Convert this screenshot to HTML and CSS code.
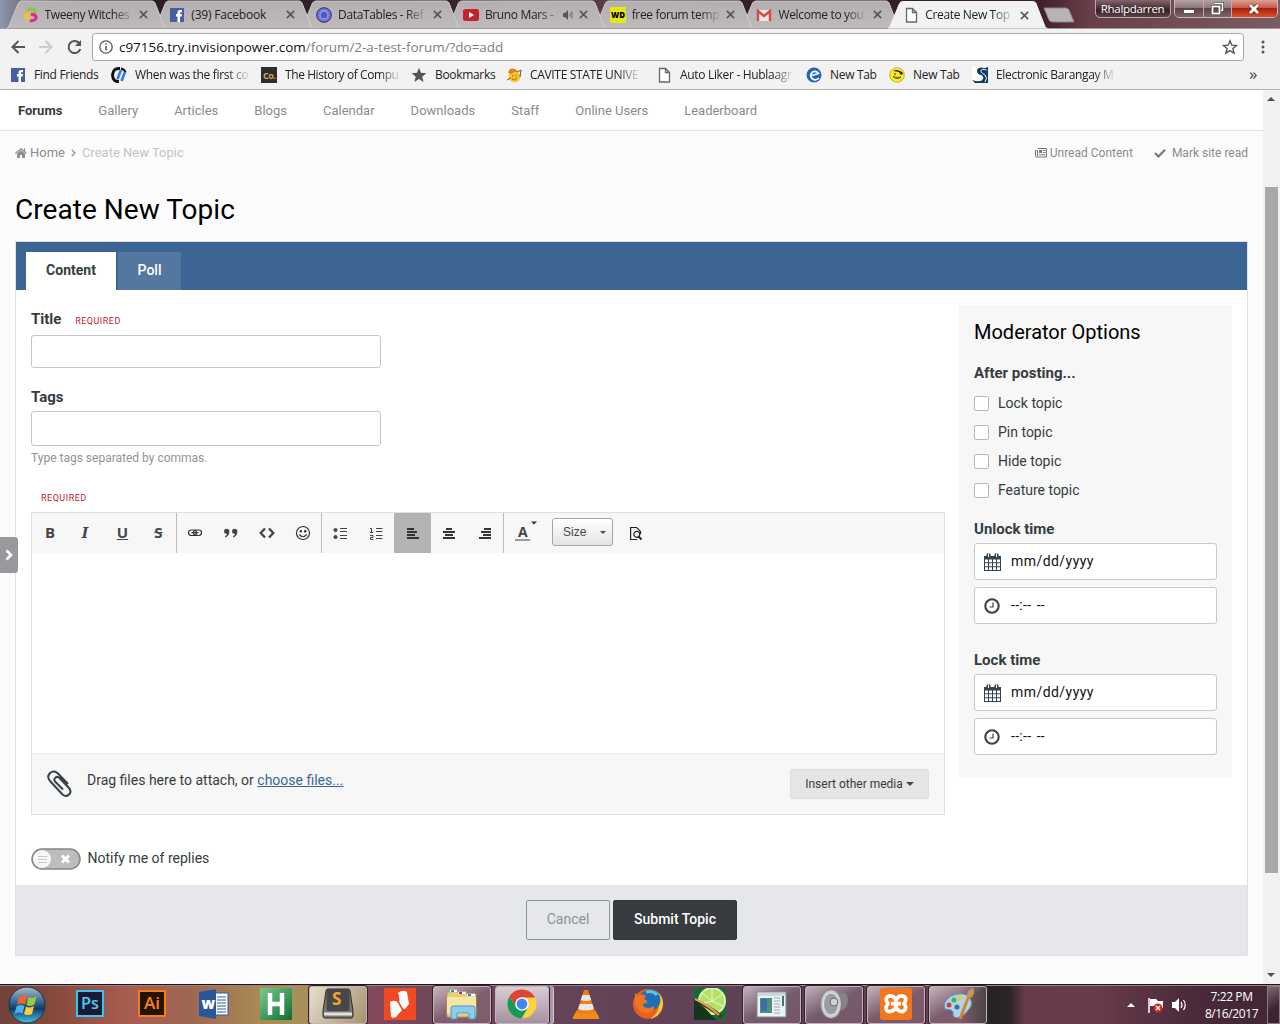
FILE: index.html
```html
<!DOCTYPE html>
<html lang="en">
<head>
<meta charset="utf-8">
<title>Create New Topic</title>
<link rel="stylesheet" href="styles.css">
</head>
<body>
<svg class="defs" width="0" height="0">
  <defs>
    <linearGradient id="tabfill" x1="0" y1="0" x2="0" y2="1"><stop offset="0" stop-color="#b3aeb0"/><stop offset="1" stop-color="#bfbabc"/></linearGradient>
    <linearGradient id="orb" x1="0" y1="0" x2="0" y2="1"><stop offset="0" stop-color="#a9bccb"/><stop offset=".45" stop-color="#2b628f"/><stop offset=".6" stop-color="#123b63"/><stop offset="1" stop-color="#3fc4ee"/></linearGradient>
    <linearGradient id="green" x1="0" y1="0" x2="1" y2="1"><stop offset="0" stop-color="#7ccc92"/><stop offset="1" stop-color="#0c6e30"/></linearGradient>
    <symbol id="tab" viewBox="0 0 160 28"><path d="M0 28 L2 26 L11.5 3 Q12.5 1 15 1 H145 Q147 1 148 3 L157 26 L159 28"/></symbol>
    <symbol id="x" viewBox="0 0 10 10"><path d="M1 1 9 9M9 1 1 9" stroke="#555" stroke-width="1.7"/></symbol>
    <symbol id="doc" viewBox="0 0 16 16"><path d="M3.5 1.5h6l4 4v9.500h-10zM9.500 1.500v4h4" fill="#fff" stroke="#666" stroke-width="1.300"/></symbol>
    <symbol id="fb" viewBox="0 0 16 16"><rect x="1" y="1" width="14" height="14" fill="#4460a0"/><path d="M8.500 15V9.500H7V7h1.500V5.500Q8.500 3 11 3h2v2.300h-1.300q-.7 0-.7.8V7h2l-.3 2.500H11V15z" fill="#fff"/></symbol>
    <symbol id="cal" viewBox="0 0 18 18"><path d="M0 3h17v15H0z" fill="#35434c"/><path d="M3 1h3v4H3zM11 1h3v4h-3z" fill="#35434c" stroke="#35434c" stroke-linejoin="round"/><path d="M4.500 1v3M12.500 1v3" stroke="#fff"/><path d="M1 6.500h3v2.800H1zM5 6.500h3v2.800H5zM9 6.500h3v2.800H9zM13 6.500h3v2.800h-3zM1 10.300h3v2.900H1zM5 10.300h3v2.900H5zM9 10.300h3v2.900H9zM13 10.300h3v2.900h-3zM1 14.200h3V17H1zM5 14.200h3V17H5zM9 14.200h3V17H9zM13 14.200h3V17h-3z" fill="#fff"/></symbol>
    <symbol id="clock" viewBox="0 0 18 18"><circle cx="8" cy="9" r="6.700" fill="#fff" stroke="#35434c" stroke-width="2.100"/><path d="M9 5.500V10H5.500" fill="none" stroke="#35434c" stroke-width="1.200"/></symbol>
  </defs>
</svg>

<header class="tabs">
  <div class="tab t1"><svg class="shape"><use href="#tab"/></svg><svg class="fav" viewBox="0 0 16 16" fill="none" stroke-width="3"><path d="M4.500 3.500q4-3 7-.5 2 3.500-3.500 4.500" stroke="#8cc63f"/><path d="M8 7.500q6 0 5 4-2 3-6 2" stroke="#e6248c"/><path d="M7 6.500q-5 .5-4.500 3Q3 12 7 11" stroke="#f0c81e"/></svg><span class="tt">Tweeny Witches</span><svg class="close"><use href="#x"/></svg></div>
  <div class="tab t2"><svg class="shape"><use href="#tab"/></svg><svg class="fav"><use href="#fb"/></svg><span class="tt full">(39) Facebook</span><svg class="close"><use href="#x"/></svg></div>
  <div class="tab t3"><svg class="shape"><use href="#tab"/></svg><svg class="fav" viewBox="0 0 16 16"><circle cx="8" cy="8" r="7.300" fill="#6f72d8" stroke="#2c2b66"/><circle cx="8" cy="8" r="4" fill="#5357c6" stroke="#9a9de8" stroke-width="1.300"/></svg><span class="tt">DataTables - Ref</span><svg class="close"><use href="#x"/></svg></div>
  <div class="tab t4"><svg class="shape"><use href="#tab"/></svg><svg class="fav" viewBox="0 0 16 16"><rect y="2" width="16" height="12" rx="2.500" fill="#c4232a"/><path d="M6 5v6l5-3z" fill="#fff"/></svg><span class="tt short">Bruno Mars -</span><svg class="snd" viewBox="0 0 12 10"><path d="M0 3h2l3-3v10L2 7H0z" fill="#555"/><path d="M7 3v4M9 1.500v7" stroke="#666"/></svg><svg class="close"><use href="#x"/></svg></div>
  <div class="tab t5"><svg class="shape"><use href="#tab"/></svg><svg class="fav" viewBox="0 0 16 16"><rect width="16" height="16" fill="#e9e413"/><text x="1" y="11" font-family="Open Sans,sans-serif" font-size="8" font-weight="800" textLength="14" lengthAdjust="spacingAndGlyphs">WD</text></svg><span class="tt">free forum temp</span><svg class="close"><use href="#x"/></svg></div>
  <div class="tab t6"><svg class="shape"><use href="#tab"/></svg><svg class="fav" viewBox="0 0 16 16"><path d="M1 3h14v11H1z" fill="#e9e6e6"/><path d="M2 14V4l6 5 6-5v10" fill="none" stroke="#d44a3e" stroke-width="2.400"/></svg><span class="tt">Welcome to you</span><svg class="close"><use href="#x"/></svg></div>
  <div class="tab active"><svg class="shape"><use href="#tab"/></svg><svg class="fav"><use href="#doc"/></svg><span class="tt">Create New Top</span><svg class="close"><use href="#x"/></svg></div>
  <svg class="newtab" viewBox="0 0 34 16"><path d="M1 1H23Q25 1 26 3L31 15H10Q7 15 6 13z" fill="#b9b3b5" stroke="#8d8588"/></svg>
  <div class="user">Rhalpdarren</div>
  <div class="winbtns">
    <span class="wb min"><svg width="14" height="14" viewBox="0 0 14 14"><rect x="1.500" y="7.500" width="11" height="4" fill="#fff" stroke="#555"/></svg></span>
    <span class="wb max"><svg width="14" height="14" viewBox="0 0 14 14" fill="none"><path d="M4.500 1.500h8v7h-2" stroke="#444" stroke-width="3"/><path d="M4.500 1.500h8v7h-2" stroke="#fff" stroke-width="1.500"/><rect x="2.500" y="4.500" width="7" height="7" stroke="#444" stroke-width="3"/><rect x="2.500" y="4.500" width="7" height="7" stroke="#fff" stroke-width="1.800"/></svg></span>
    <span class="wb cls"><svg width="12" height="12" viewBox="0 0 12 12"><path d="M2 2 10 10M10 2 2 10" stroke="#6b2a26" stroke-width="4.500"/><path d="M2 2 10 10M10 2 2 10" stroke="#fff" stroke-width="2.800"/></svg></span>
  </div>
</header>

<div class="toolbar">
  <svg class="nav" width="80" height="18" viewBox="0 0 80 18" fill="none" stroke-width="2"><path d="M15 9H2.500M8.500 3l-6 6 6 6" stroke="#555"/><path d="M29 9h12.500M35.500 3l6 6-6 6" stroke="#ccc"/><path d="M69 5A6 6 0 1 0 70.300 11" stroke="#555"/><path d="M71 2v6h-6z" fill="#555"/></svg>
  <div class="address">
    <svg width="14" height="14" viewBox="0 0 14 14"><circle cx="7" cy="7" r="6.200" fill="none" stroke="#555" stroke-width="1.300"/><path d="M7 6v4.500M7 3.300v1.500" stroke="#555" stroke-width="1.500"/></svg>
    <span class="url">c97156.try.invisionpower.com<i>/forum/2-a-test-forum/?do=add</i></span>
    <svg width="16" height="16" viewBox="0 0 16 16"><path d="M8 1.800l1.800 4.400 4.700.3-3.600 3 1.200 4.700L8 11.600l-4.100 2.600 1.200-4.700-3.600-3 4.700-.3z" fill="none" stroke="#555" stroke-width="1.400"/></svg>
  </div>
  <svg class="dots" width="4" height="14" viewBox="0 0 4 14" fill="#555"><circle cx="2" cy="2" r="1.500"/><circle cx="2" cy="7" r="1.500"/><circle cx="2" cy="12" r="1.500"/></svg>
</div>

<div class="bookmarks">
  <div class="bm b1"><svg><use href="#fb"/></svg><span>Find Friends</span></div>
  <div class="bm b2"><svg viewBox="0 0 16 16" fill="none"><path d="M9 1.500Q2 1 1.500 8 2 15 8 14.500" stroke="#111" stroke-width="3"/><path d="M10 1.500q4 1 4.500 4" stroke="#111" stroke-width="2"/><path d="M6.500 12 10 3M10.500 14l3.500-9" stroke="#2f7de0" stroke-width="2.600"/></svg><span class="fade">When was the first co</span></div>
  <div class="bm b3"><svg viewBox="0 0 16 16"><rect width="16" height="16" fill="#2f2d2b"/><text x="2" y="12" font-family="Open Sans,sans-serif" font-size="9" font-weight="700" fill="#c9a75e">Co.</text></svg><span class="fade">The History of Compu</span></div>
  <div class="bm b4"><svg viewBox="0 0 16 16"><path d="M8 .8l2 5 5.400.4-4.200 3.500 1.400 5.400L8 12.100l-4.600 3 1.400-5.400L.6 6.200 6 5.800z" fill="#555"/></svg><span>Bookmarks</span></div>
  <div class="bm b5"><svg viewBox="0 0 16 16"><circle cx="8.500" cy="9.500" r="5.800" fill="#f7c42a"/><path d="M2 6q1-6 7-4l4 3q-5-1-8 2z" fill="#ea7b25"/><path d="M1 13l4-2M11 5l4-2-1 7" stroke="#6c5a32" fill="none"/><path d="M6 12q3 2 5-1M6.500 8v1.500M10 8v1.500" stroke="#b86a14" fill="none"/></svg><span class="fade">CAVITE STATE UNIVE</span></div>
  <div class="bm b6"><svg><use href="#doc"/></svg><span class="fade">Auto Liker - Hublaagr</span></div>
  <div class="bm b7"><svg viewBox="0 0 16 16"><circle cx="8" cy="8" r="7.500" fill="#2565b8"/><path d="M13 11Q10 14 6.500 12 3 8.500 6.500 5q4-2 6 1.500L6 8.500" fill="none" stroke="#fff" stroke-width="1.700"/></svg><span>New Tab</span></div>
  <div class="bm b8"><svg viewBox="0 0 16 16"><circle cx="8" cy="8" r="7.300" fill="#ffee1c" stroke="#b3a31a" stroke-width=".8"/><path d="M4 4q5-3 10 2l-1 2-2-1-1-2z" fill="#222"/><path d="M5 7h2" stroke="#222"/><path d="M4 9.500q4 4 8 .5-4 1-8-.5z" fill="#fff" stroke="#222" stroke-width=".7"/></svg><span>New Tab</span></div>
  <div class="bm b9"><svg viewBox="0 0 16 16"><rect width="16" height="16" fill="#fff"/><path d="M13 1Q5-1 5 4q0 3 4 4 3 1 2 4-2 4-11 1l3 3h13V0z" fill="#103a5e"/><path d="M14.500 3Q9 1 9 4.500q1 2 4 3.500 3 3 0 7" fill="none" stroke="#fff"/></svg><span class="fade">Electronic Barangay M</span></div>
  <span class="more">»</span>
</div>

<div class="viewport">
  <main class="page">
    <nav class="sitenav"><b>Forums</b><a>Gallery</a><a>Articles</a><a>Blogs</a><a>Calendar</a><a>Downloads</a><a>Staff</a><a>Online Users</a><a>Leaderboard</a></nav>
    <div class="crumbs">
      <svg width="12" height="10" viewBox="0 0 12 10"><path d="M6 2.200 2 5.500V10h3V7h2v3h3V5.500z" fill="#8f8f8f"/><path d="M.4 5.400 6 .8l5.600 4.600M9.500 .5v3" fill="none" stroke="#8f8f8f" stroke-width="1.300"/></svg>
      <span class="home">Home</span>
      <svg class="chev" width="5" height="8" viewBox="0 0 5 8"><path d="M.8.8 4 4 .8 7.200" fill="none" stroke="#999" stroke-width="1.400"/></svg>
      <span class="here">Create New Topic</span>
      <svg width="12" height="10" viewBox="0 0 12 10"><path d="M2.500.5h9v8.500H1.500Q.5 9 .5 8V2.500h2V8" fill="none" stroke="#777"/><path d="M4 2h3v3H4z" fill="#777"/><path d="M8 2.500h2.500M8 4.500h2.500M4 6.800h6.500" stroke="#777"/></svg>
      <span class="unread">Unread Content</span>
      <svg class="check" width="12" height="10" viewBox="0 0 12 10"><path d="M1 5l3.500 3.500L11 1.800" fill="none" stroke="#777" stroke-width="2.200"/></svg>
      <span class="mark">Mark site read</span>
    </div>
    <h1>Create New Topic</h1>
    <section class="panel">
      <div class="ptabs"><span class="on">Content</span><span class="off">Poll</span></div>
      <div class="cols">
        <div class="form">
          <div class="label">Title <em>REQUIRED</em></div>
          <div class="input title"></div>
          <div class="label second">Tags</div>
          <div class="input tags"></div>
          <div class="hint">Type tags separated by commas.</div>
          <div class="req"><em>REQUIRED</em></div>
          <div class="editor">
            <div class="edbar">
              <div class="grp">
                <span class="bt bold">B</span><span class="bt ital">I</span><span class="bt under">U</span><span class="bt strike">S</span>
              </div>
              <div class="grp">
                <span class="bt"><svg width="16" height="16" viewBox="0 0 16 16" fill="none" stroke="#333" stroke-width="1.200"><rect x="1.500" y="5" width="8" height="5.500" rx="2.700"/><rect x="6.500" y="5" width="8" height="5.500" rx="2.700"/><path d="M4.500 7.700h7"/></svg></span>
                <span class="bt"><svg width="16" height="16" viewBox="0 0 16 16" fill="#444"><path d="M1 6.500a2.700 2.700 0 1 1 5.400 0q0 4-3.900 6l-.6-.9Q4 10 4 8.700 1 9 1 6.500zM9 6.500a2.700 2.700 0 1 1 5.400 0q0 4-3.900 6l-.6-.9Q12 10 12 8.700 9 9 9 6.500z"/></svg></span>
                <span class="bt"><svg width="16" height="16" viewBox="0 0 16 16" fill="none" stroke="#444" stroke-width="2.300"><path d="M6 3.500 1.700 8 6 12.500M10 3.500 14.300 8 10 12.500"/></svg></span>
                <span class="bt"><svg width="16" height="16" viewBox="0 0 16 16" fill="none" stroke="#333" stroke-width="1.200"><circle cx="8" cy="8" r="6.500"/><path d="M4.300 9.500Q8 14 11.700 9.500"/><circle cx="5.800" cy="6.200" r=".7" fill="#333"/><circle cx="10.200" cy="6.200" r=".7" fill="#333"/></svg></span>
              </div>
              <div class="grp lists">
                <span class="bt"><svg width="16" height="16" viewBox="0 0 16 16" stroke="#444" fill="#444"><circle cx="3.500" cy="5" r="1.600"/><circle cx="3.500" cy="12" r="1.600"/><path d="M8 3.500h7M8 6.500h7M8 10.500h7M8 13.500h7"/></svg></span>
                <span class="bt"><svg width="16" height="16" viewBox="0 0 16 16" stroke="#444" fill="none"><path d="M2 3.500h1.500v4M2 7.500h3M2 10.500h3v2H2.500v2H5.500M8 3.500h6.500M8 6.500h6.500M8 10.500h6.500M8 13.500h6.500"/></svg></span>
              </div>
              <div class="grp aligns">
                <span class="bt sel"><svg width="12" height="12" viewBox="0 0 12 12" fill="#333"><path d="M0 0h7v2H0zM0 3h10v2H0zM0 6h8v2H0zM0 9h12v2H0z"/></svg></span>
                <span class="bt"><svg width="12" height="12" viewBox="0 0 12 12" fill="#333"><path d="M3 0h6v2H3zM0 3h12v2H0zM2 6h8v2H2zM0 9h12v2H0z"/></svg></span>
                <span class="bt"><svg width="12" height="12" viewBox="0 0 12 12" fill="#333"><path d="M5 0h7v2H5zM2 3h10v2H2zM4 6h8v2H4zM0 9h12v2H0z"/></svg></span>
              </div>
              <svg class="color" width="26" height="24" viewBox="0 0 26 24"><text x="3" y="17" font-family="Open Sans,sans-serif" font-size="14" font-weight="700" fill="#444">A</text><path d="M0 20h15" stroke="#999" stroke-width="2"/><path d="M16 1.500h6l-3 3z" fill="#333"/></svg>
              <div class="size">Size<i></i></div>
              <svg class="prev" width="14" height="15" viewBox="0 0 14 15" fill="none" stroke="#222" stroke-width="1.200"><path d="M8 13.500H1.600V1.500h6l3.500 3.500M11.500 5v3"/><circle cx="7.800" cy="8.300" r="3"/><path d="M9.500 10.500l3 3" stroke-width="2"/></svg>
            </div>
            <div class="area"></div>
            <div class="attach">
              <svg width="26" height="28" viewBox="0 0 26 28" fill="none" stroke="#35434c" stroke-width="2"><path d="M21 14 11 3.500Q7-.3 3 3-.5 7 3 11l12.500 13.500q3.500 3 6.500 0 3-3 0-6.500L12 7.500Q9.500 6 8 8q-1.500 2 .5 4L16 19.500"/></svg>
              <span>Drag files here to attach, or <u>choose files...</u></span>
              <div class="media">Insert other media <i></i></div>
            </div>
          </div>
          <div class="notify"><svg width="50" height="22" viewBox="0 0 50 22"><rect x="1" y="1" width="48" height="20" rx="10" fill="#bdbdbd" stroke="#858585" stroke-width="1.500"/><circle cx="11" cy="11" r="9" fill="#f7f7f7"/><path d="M7 8.500h9M7 11.500h9M7 14.500h9" stroke="#c8c8c8"/><path d="M31 7.500l7 7M38 7.500l-7 7" stroke="#fff" stroke-width="3"/></svg><span>Notify me of replies</span></div>
        </div>
        <aside class="mod">
          <h2>Moderator Options</h2>
          <h3 class="after">After posting...</h3>
          <div class="opt"><i></i><span>Lock topic</span></div>
          <div class="opt"><i></i><span>Pin topic</span></div>
          <div class="opt"><i></i><span>Hide topic</span></div>
          <div class="opt"><i></i><span>Feature topic</span></div>
          <h3 class="unlock">Unlock time</h3>
          <div class="dt"><svg><use href="#cal"/></svg><span class="date">mm/dd/yyyy</span></div>
          <div class="dt"><svg><use href="#clock"/></svg><span class="time">--:-- --</span></div>
          <h3 class="lock">Lock time</h3>
          <div class="dt"><svg><use href="#cal"/></svg><span class="date">mm/dd/yyyy</span></div>
          <div class="dt"><svg><use href="#clock"/></svg><span class="time">--:-- --</span></div>
        </aside>
      </div>
      <div class="foot"><span class="cancel">Cancel</span><span class="submit">Submit Topic</span></div>
    </section>
    <div class="handle"><svg width="8" height="12" viewBox="0 0 8 12"><path d="M1.500 1.500 6 6l-4.500 4.500" fill="none" stroke="#fff" stroke-width="2.600"/></svg></div>
  </main>
  <div class="scroll"><i class="up"></i><b></b><i class="down"></i></div>
</div>

<footer class="taskbar">
  <div class="start"><svg width="38" height="38" viewBox="0 0 38 38"><circle cx="19" cy="19" r="18" fill="url(#orb)" stroke="#1b3446"/><path d="M11 11q4-3 8-.5l-2 8q-4-2-8 .5z" fill="#f0642c"/><path d="M20.500 11q4 2 8-.5l-2 8q-4 2.500-8 .5z" fill="#9acb3c"/><path d="M8.500 20.500q4-2.500 8-.5l-2 7.500q-4-2-8 .5z" fill="#4fb3ea"/><path d="M18 20.500q4 2 8-.5l-2 8q-4 2-8 0z" fill="#fbcc3a"/></svg></div>
  <div class="slot"><svg viewBox="0 0 32 32"><rect x="3" y="3" width="26" height="25" fill="#1c1a31" stroke="#35c5f2" stroke-width="2"/><text x="7" y="21" font-family="Open Sans,sans-serif" font-size="17" font-weight="600" fill="#4bcbf5" textLength="18" lengthAdjust="spacingAndGlyphs">Ps</text></svg></div>
  <div class="slot"><svg viewBox="0 0 32 32"><rect x="3" y="3" width="26" height="25" fill="#251302" stroke="#f57e14" stroke-width="2"/><text x="8" y="21" font-family="Open Sans,sans-serif" font-size="17" font-weight="600" fill="#f7841b" textLength="16" lengthAdjust="spacingAndGlyphs">Ai</text></svg></div>
  <div class="slot"><svg viewBox="0 0 32 32"><rect x="16" y="5" width="14" height="22" fill="#fff" stroke="#2c5ba6"/><path d="M19 9h9M19 12h9M19 15h9M19 18h9M19 21h9M19 24h9" stroke="#2c5ba6"/><path d="M1 4 18 1v30L1 28z" fill="#2b579a"/><text x="3.500" y="21" font-family="Open Sans,sans-serif" font-size="15" font-weight="800" fill="#fff">w</text></svg></div>
  <div class="slot"><svg viewBox="0 0 32 32"><path d="M0 0h32v32H0z" fill="url(#green)"/><path d="M10 5v22M22 5v22M10 16h12" stroke="#fff" stroke-width="4.500"/></svg></div>
  <div class="slot open bright"><svg viewBox="0 0 32 32"><path d="M4 3Q4 1 6 1h20q2 0 2 2l3 20v5q0 2-2 2H3q-2 0-2-2v-5z" fill="#777775" stroke="#2b2b2b"/><rect x="4.500" y="1" width="23" height="22" rx="2" fill="#474747"/><path d="M2 26h28" stroke="#e2e2e0" stroke-width="3"/><text x="10" y="17" font-family="Open Sans,sans-serif" font-size="17" font-weight="700" fill="#f6a13a">S</text></svg></div>
  <div class="slot"><svg viewBox="0 0 32 32"><path d="M0 0h32v32H0z" fill="#f04a22"/><path d="M6 14q5-3 8 1l4 7-6 7q-4 2-5-1z" fill="#fff"/><path d="M14 5q5-4 9-1l2 12-4 5q-3 0-4-4-3-2-3-6z" fill="#fff"/><path d="M14 6l1 9 5 9" fill="none" stroke="#f04a22" stroke-width="1.300"/></svg></div>
  <div class="slot open"><svg viewBox="0 0 32 32"><path d="M1 4h10l2 2h17v23H1z" fill="#e5cf7c" stroke="#b49b4b"/><path d="M4 3h7M12 5h8M21 7h8" stroke="#fff" stroke-width="2.500"/><path d="M5 3h3" stroke="#2ca93e" stroke-width="2"/><path d="M13 5h3" stroke="#cf3122" stroke-width="2"/><path d="M22 7h3" stroke="#2480d2" stroke-width="2"/><path d="M1 9h29v17H1z" fill="#f6e7a2"/><path d="M5 31V20q0-2 2-2h20q2 0 2 2v11h-6v-6H11v6z" fill="#8ecbee" stroke="#4b98c4"/></svg></div>
  <div class="slot open chrome"><svg viewBox="0 0 32 32"><circle cx="16" cy="16" r="14.500" fill="#fdd23e"/><path d="M3.500 8.500A14.500 14.500 0 0 1 29 9.500H16L10 19z" fill="#db4437"/><path d="M3.500 8.500A14.500 14.500 0 0 0 15.500 30.500l6-10-11-1z" fill="#159a59"/><circle cx="16" cy="16" r="6.800" fill="#fff"/><circle cx="16" cy="16" r="5.400" fill="#4285f4"/></svg></div>
  <div class="slot"><svg viewBox="0 0 32 32"><path d="M7 22h18l4 7v2H3v-2z" fill="#f48a1c"/><path d="M14 2h4l7 22q-9 4-18 0z" fill="#f27d16"/><path d="M12.500 7h7l1.700 5q-5 2-10.500 0zM9.700 16h12.700l1.500 5q-8 3-15.800 0z" fill="#e6e8ea"/></svg></div>
  <div class="slot"><svg viewBox="0 0 32 32"><circle cx="16" cy="16" r="15" fill="#e8601c"/><path d="M22 2q10 5 9 15-2 12-13 14 9-6 9-15 0-8-5-14z" fill="#f9c43c"/><circle cx="18" cy="12" r="10.500" fill="#1f6fb4"/><path d="M14 4q7-2 11 3" stroke="#62c2e7" stroke-width="3" fill="none"/><path d="M3 5l4 3q4-3 7 0l-2 3q4 1 3 4-4 0-4 3 5 4 11 0 1 6-6 7Q5 25 3 15z" fill="#ee7426"/></svg></div>
  <div class="slot"><svg viewBox="0 0 32 32"><path d="M0 0h32v32H0z" fill="#126c35"/><circle cx="18" cy="13" r="13" fill="#b5e06a" stroke="#d9f4ac" stroke-width="2"/><path d="M18 13V1M18 13l10-6M18 13l11 5M18 13 8 5M18 13 6 16" stroke="#e8f7c9"/><path d="M0 12q15 6 28 17" stroke="#632d11" stroke-width="3.500"/><path d="M0 11q12 9 22 21H0z" fill="#17351c"/><path d="M1 11q13 6 24 16" stroke="#cfae62" stroke-width="2" fill="none"/></svg></div>
  <div class="slot open"><svg viewBox="0 0 32 32"><rect x="1" y="4" width="29" height="25" fill="#eef2f5" stroke="#7a8793"/><path d="M2 6.500h27" stroke="#cdd8e2" stroke-width="3"/><path d="M4 10h12v15H4z" fill="#4d8f84"/><path d="M5 11h6v12H5z" fill="#3a6faa"/><path d="M18 10h6M18 13h6M18 16h6M18 19h6M18 22h6M18 25h6" stroke="#9aa"/><path d="M26 8h2v10h-2z" fill="#377c6c"/></svg></div>
  <div class="slot open"><svg viewBox="0 0 32 32"><path d="M16 2l6 4q7-4 8 6-1 10-7 10l-8 8z" fill="#838587"/><ellipse cx="13" cy="16" rx="10.500" ry="14.500" fill="#c9cbcd" stroke="#77797b"/><ellipse cx="13" cy="16" rx="7.500" ry="11" fill="#9b9da0" stroke="#e7e7e7"/><circle cx="16" cy="14" r="4" fill="#d0d1d3" stroke="#66686b"/></svg></div>
  <div class="slot open"><svg viewBox="0 0 32 32"><rect width="32" height="32" rx="3" fill="#f3761d"/><path d="M16 13Q14 7 9 8 4 10 8 15.500 4 21 8 23.500q6 1 8-5.500 2 6.500 7 5.500 5-3 1-8 4-5.500-1-7.500-5-1-7 5M11 15.700h10" fill="none" stroke="#fff" stroke-width="3.700"/></svg></div>
  <div class="slot open"><svg viewBox="0 0 32 32"><path d="M3 21q-3-7 6-13 12-5 18 1 5 7 0 12-4 6-9 8-6 2-7-2 1-4-2-5z" fill="#a9d5ee" stroke="#5a94b7"/><circle cx="7" cy="17" r="2.500" fill="#da3f35"/><circle cx="12" cy="12" r="2.500" fill="#4cae4e"/><circle cx="18" cy="10" r="2.500" fill="#f3c635"/><circle cx="15" cy="19" r="2.500" fill="#4b6b8a"/><path d="M28 5 18 31" stroke="#dc8424" stroke-width="3"/><path d="M25 8q0-7 6-8 3 5-2 10z" fill="#c69a55"/></svg></div>
  <svg class="tray" width="66" height="20" viewBox="0 0 66 20"><path d="M3 12h8L7 8z" fill="#fff"/><path d="M25 3v15" stroke="#fff" stroke-width="1.500"/><path d="M26 4h6l2 2h5v7h-5l-2-2h-6z" fill="#fff"/><circle cx="34" cy="13" r="4.500" fill="#d3242b"/><path d="M32 11l4 4M36 11l-4 4" stroke="#fff" stroke-width="1.400"/><path d="M48 7h3l4-4v14l-4-4h-3z" fill="#fff"/><path d="M57 7q2 3 0 6M59.500 5q3.500 5 0 10" fill="none" stroke="#fff" stroke-width="1.200"/></svg>
  <div class="when"><span>7:22 PM</span><span>8/16/2017</span></div>
  <div class="peek"></div>
</footer>
</body>
</html>
```
FILE: styles.css
```css
* { box-sizing: border-box; }
body { margin: 0; width: 1280px; height: 1024px; overflow: hidden; display: flex; flex-direction: column; background: #fcfcfc; font-family: Roboto, sans-serif; color: #353c41; }
.defs { position: absolute; }
i, em { font-style: normal; }
svg { flex: none; }

.tabs { height: 29px; flex: none; display: flex; padding-left: 7px; background: linear-gradient(90deg, #8d97ad 0, #6e6571 30px, #2b1c25 90px, #35252c 460px, #5a4348 620px, #2d1d26 760px, #3f2028 1040px, #693f49 1090px, #7a5c62 1280px); border-bottom: 1px solid #a39ea1; }
.tab { width: 146.8px; flex: none; height: 28px; display: flex; align-items: center; padding: 1px 0 0 15.500px; position: relative; }
.shape { position: absolute; left: 0; top: 0; width: 160px; height: 28px; fill: url(#tabfill); stroke: #d0cbcd; }
.t1 { z-index: 7; } .t2 { z-index: 6; } .t3 { z-index: 5; } .t4 { z-index: 4; } .t5 { z-index: 3; } .t6 { z-index: 2; }
.active { z-index: 9; height: 29px; }
.active .shape { fill: #f2f2f2; stroke: #f2f2f2; height: 29px; }
.fav { width: 16px; height: 16px; position: relative; margin-right: 6px; }
.tt { position: relative; width: 87px; flex: none; white-space: nowrap; font: 12px/18px "Open Sans", sans-serif; letter-spacing: -0.35px; color: #222; -webkit-mask-image: linear-gradient(90deg, #000 68px, rgba(0,0,0,.12) 87px); }
.tt.full { -webkit-mask-image: none; letter-spacing: -0.2px; }
.tt.short { width: 72px; -webkit-mask-image: linear-gradient(90deg, #000 54px, rgba(0,0,0,.3) 72px); }
.snd { position: relative; width: 12px; height: 10px; margin-left: 6px; margin-right: -3px; }
.close { position: relative; width: 9px; height: 9px; margin-left: 7.500px; }
.newtab { width: 34px; height: 16px; margin: 7px 0 0 8px; }
.user { margin-left: 18px; width: 76px; height: 19px; margin-top: -1px; border: 1px solid #b9a9ac; border-radius: 0 0 5px 5px; background: linear-gradient(#85666c, #352027 60%, #5b454b); color: #fff; font: 11.5px/18px "Open Sans", sans-serif; letter-spacing: -0.3px; text-align: center; }
.winbtns { margin-left: 3px; display: flex; height: 19px; margin-top: -1px; border: 1px solid #c6b9bc; border-radius: 0 0 5px 5px; overflow: hidden; width: 104px; flex: none; }
.wb { width: 28px; display: flex; align-items: center; justify-content: center; background: linear-gradient(#b5a1a5, #8f777c 45%, #5e4247 50%, #806469); }
.max, .cls { border-left: 1px solid #b9a9ac; }
.cls { flex: 1; background: linear-gradient(#dba193, #c9594a 45%, #ad1f0c 50%, #d4502e); }

.toolbar { height: 33px; flex: none; background: #f2f2f2; display: flex; align-items: center; padding: 3px 0 0 10px; }
.address { margin-left: 2px; width: 1152px; height: 28px; border: 1px solid #aaa; border-radius: 3px; background: #fff; display: flex; align-items: center; padding: 0 5px 0 6px; }
.url { flex: 1; margin-left: 6px; font: 13.5px/20px "Open Sans", sans-serif; letter-spacing: -0.04px; color: #111; white-space: nowrap; }
.url i { color: #808080; }
.dots { margin-left: 17px; }

.bookmarks { height: 28px; flex: none; background: #f2f2f2; border-bottom: 1px solid #b6b4b6; display: flex; align-items: center; padding-left: 10px; font: 12px/18px "Open Sans", sans-serif; letter-spacing: -0.32px; color: #222; }
.bm { display: flex; align-items: center; flex: none; padding-bottom: 2px; }
.bm svg { width: 16px; height: 16px; margin-right: 8px; }
.bm span { white-space: nowrap; }
.fade { -webkit-mask-image: linear-gradient(90deg, #000 calc(100% - 20px), rgba(0,0,0,.12)); }
.b1 { width: 101px; } .b2 { width: 150px; } .b3 { width: 150px; letter-spacing: -0.42px; } .b4 { width: 95px; } .b5 { width: 150px; } .b6 { width: 150px; }
.b7 { width: 83px; } .b8 { width: 83px; } .b9 { width: 136px; }
.more { margin-left: auto; margin-right: 23px; font-size: 17px; color: #444; padding-bottom: 3px; }

.viewport { height: 894px; flex: none; display: flex; }
.page { width: 1263px; flex: none; position: relative; background: #fcfcfc; }
.sitenav { height: 41px; background: #fff; border-bottom: 1px solid #e0e0e0; display: flex; gap: 36px; padding-left: 18px; font-size: 13px; line-height: 41px; color: #8b8b8b; }
.sitenav b { color: #353c41; font-weight: 700; }
.crumbs { height: 44px; display: flex; align-items: center; padding: 0 15px 1px; font-size: 13px; color: #8b8b8b; }
.crumbs span { line-height: 16px; }
.home { margin-left: 3px; }
.chev { margin: 0 6px; }
.here { color: #c3c3c3; flex: 1; }
.unread, .mark { font-size: 12px; margin-left: 3px; }
.check { margin-left: 21px; }
.mark { margin-left: 6px; }
h1, h2, h3 { margin: 0; font-weight: 400; color: #000; }
h1 { font-size: 28px; line-height: 36px; margin: 17px 0 13px 15px; letter-spacing: 0.04px; }
.panel { margin-left: 15px; width: 1233px; border: 1px solid #dfe1e3; background: #fff; }
.ptabs { height: 48px; background: #3d6594; display: flex; gap: 2px; padding: 10px 0 0 10px; font-size: 14px; font-weight: 500; line-height: 37px; text-align: center; }
.on { width: 90px; background: #fff; font-weight: 700; color: #353c41; }
.off { width: 63px; background: #53779f; color: #fff; }
.cols { display: flex; gap: 14px; padding: 15px 15px 0; align-items: flex-start; height: 595px; }
.form { width: 914px; flex: none; }
.label { height: 28px; line-height: 28px; margin-bottom: 2px; font-size: 15px; font-weight: 700; }
em { font-size: 9px; font-weight: 400; letter-spacing: 0.5px; color: #c0192b; margin-left: 10px; }
.input { width: 350px; border: 1px solid #c5c5c5; border-radius: 3px; background: #fff; }
.title { height: 33px; }
.second { margin: 15px 0 0; }
.tags { height: 35px; }
.hint { font-size: 12px; line-height: 24px; color: #8f9498; }
.req { height: 30px; line-height: 30px; margin-top: 12px; }
.req em { vertical-align: middle; }
.editor { height: 303px; border: 1px solid #e0e0e0; }
.edbar { height: 40px; background: #f7f7f7; display: flex; align-items: center; }
.grp { display: flex; height: 40px; border-right: 1px solid #bcbcbc; }
.lists { border: 0; }
.bt { width: 36px; display: flex; align-items: center; justify-content: center; font: 700 15px/38px "Open Sans", sans-serif; color: #484848; }
.bold, .under, .strike, .ital { padding-bottom: 2px; }
.under, .strike { padding-left: 1px; }
.ital { font-family: "DejaVu Serif", serif; font-style: italic; font-size: 14px; padding-right: 2px; padding-bottom: 0; }
.under { text-decoration: underline; }
.strike { text-decoration: line-through; }
.sel { width: 37px; background: #b3b3b3; }
.aligns svg { margin-top: 1px; }
.color { margin: 0 0 3px 11px; }
.size { margin-left: 11px; margin-bottom: 2px; width: 61px; height: 28px; border: 1px solid #a6a6a6; border-radius: 3px; background: linear-gradient(#fff, #e4e4e4); font: 12px/26px "Liberation Sans", sans-serif; padding: 0 6px 0 10px; display: flex; justify-content: space-between; align-items: center; color: #474747; }
.size i, .media i { border: 3px solid transparent; border-top-color: #474747; border-bottom: 0; }
.prev { margin-left: 16px; }
.area { height: 200px; background: #fff; }
.attach { height: 61px; background: #f7f7f7; border-top: 1px solid #ebebeb; display: flex; padding: 0 15px; font-size: 14px; }
.attach svg { margin: 16px 0 0 0; }
.attach span { margin-left: 14px; line-height: 52px; flex: 1; }
u { color: #3d6594; }
.media { margin-top: 15px; width: 139px; height: 30px; background: #e5e5e5; border: 1px solid #dedede; border-radius: 2px; font-size: 12px; display: flex; align-items: center; justify-content: center; gap: 3px; }
.media i { border-width: 4px 4px 0; }
.notify { margin-top: 33px; height: 22px; display: flex; align-items: center; font-size: 14px; line-height: 20px; }
.notify span { margin: 0 0 2px 6.500px; }
.mod { width: 273px; height: 472px; background: #f7f7f7; padding: 15px; }
h2 { font-size: 20px; line-height: 24px; }
h3 { font-size: 15px; font-weight: 700; line-height: 24px; color: #353c41; }
.after { margin: 17px 0 4px; }
.opt { height: 29px; line-height: 18px; font-size: 14px; display: flex; align-items: center; }
.opt span { padding-bottom: 2px; }
.opt i { width: 15px; height: 15px; border: 1px solid #b8b8b8; border-radius: 2px; background: #fff; margin-right: 9px; }
.unlock { margin: 12px 0 2px; }
.lock { margin: 24px 0 2px; }
.dt { height: 37px; border: 1px solid #c9c9c9; border-radius: 3px; background: #fff; display: flex; align-items: center; padding-left: 9px; font-size: 14px; color: #111; }
.dt + .dt { margin-top: 7px; }
.dt svg { width: 18px; height: 18px; margin-right: 9px; }
.date { letter-spacing: 0.45px; padding-bottom: 2px; }
.time { padding-bottom: 2px; word-spacing: 1.5px; letter-spacing: 0.3px; }
.foot { height: 70px; background: #e5e7eb; display: flex; justify-content: center; align-items: center; gap: 3px; font-size: 14px; text-align: center; line-height: 37px; }
.cancel { width: 84px; height: 40px; border: 1px solid #8f9499; border-radius: 2px; color: #8d9298; }
.submit { width: 124px; height: 40px; border: 1px solid #323539; border-radius: 2px; background: #383b40; color: #fff; font-weight: 500; }
.handle { position: absolute; left: 0; top: 447px; width: 18px; height: 36px; background: #99999d; border-radius: 0 3px 3px 0; display: flex; align-items: center; justify-content: center; }
.scroll { width: 17px; background: #f1f1f1; padding: 7px 3px 7px 2px; display: flex; flex-direction: column; align-items: center; }
.scroll i { border: 4px solid transparent; }
.scroll .up { border-bottom-color: #505050; border-top: 0; }
.scroll .down { border-top-color: #505050; border-bottom: 0; margin-top: auto; }
.scroll b { width: 13px; height: 686px; background: #a8a8a8; margin-top: 86px; }

.taskbar { height: 40px; flex: none; border-top: 1px solid #1e1519; box-shadow: inset 0 1px #9d8288; display: flex; align-items: center; gap: 4px; background: linear-gradient(90deg, #71413a 0, #84483c 50px, #a95d51 130px, #9d6653 190px, #a98b53 260px, #a8905a 310px, #84495b 370px, #70465a 430px, #634458 560px, #5e4055 820px, #6b4354 960px, #262422 990px, #2b2426 1010px, #673b49 1025px, #6a3c4b 1090px, #48293a 1200px, #422734 1280px); }
.start { width: 57px; flex: none; padding-left: 8px; height: 38px; }
.slot { width: 58px; height: 38px; flex: none; display: flex; align-items: center; justify-content: center; }
.slot svg { width: 32px; height: 32px; margin-bottom: 2px; }
.open { border: 1px solid #c4b1bc; border-radius: 3px; background: linear-gradient(150deg, rgba(255,255,255,.6), rgba(255,255,255,.14) 50%, rgba(255,255,255,.12)); box-shadow: 0 0 0 1px #34212c; }
.bright { background: linear-gradient(120deg, #e7dfcb, #a4936e); }
.chrome { width: 54px; margin-right: 4px; background: linear-gradient(#d9cdd6, #a590a0); box-shadow: 1px 0 #2e1f28, 4px 0 #a898a4, 5px 0 #d3c6cf; }
.tray { margin-left: 133px; }
.when { width: 70px; margin-left: 3px; display: flex; flex-direction: column; color: #fff; font: 12px/17px "Open Sans", sans-serif; letter-spacing: -0.4px; text-align: center; padding-bottom: 0; }
.peek { width: 13px; flex: none; height: 38px; border: 1px solid #8f7883; background: linear-gradient(150deg, #7d6772, #3a2530 60%); margin-left: -3px; }
```
